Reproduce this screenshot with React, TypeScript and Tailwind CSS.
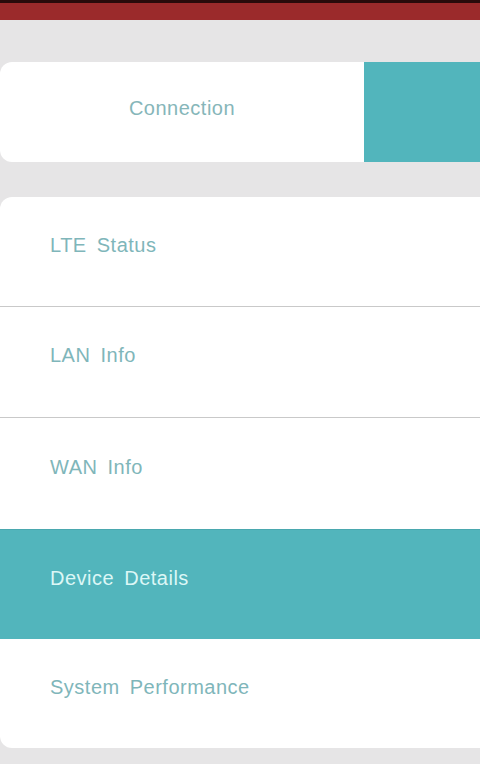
import React from "react";

const items = [
  { label: "LTE Status", active: false, h: "h-[110px]" },
  { label: "LAN Info", active: false, h: "h-[111px]" },
  { label: "WAN Info", active: false, h: "h-[111px]" },
  { label: "Device Details", active: true, h: "h-[110px]" },
  { label: "System Performance", active: false, h: "h-[109px]" },
];

export default function App() {
  return (
    <div
      className="w-[480px] h-[764px] bg-[#e6e5e6] flex flex-col overflow-hidden"
      style={{ fontFamily: '"Liberation Sans", Arial, sans-serif' }}
    >
      <div className="h-[3px] bg-[#2a0b0b]" />
      <div className="h-[17px] bg-[#9b2a2b]" />
      <div className="h-[42px]" />
      <div className="h-[100px] flex">
        <div className="w-[364px] bg-white rounded-l-[12px] flex items-center justify-center pb-[8px]">
          <span className="text-[20px] text-[#86b6b9] tracking-[0.5px]">Connection</span>
        </div>
        <div className="flex-1 bg-[#52b5bc]" />
      </div>
      <div className="h-[35px]" />
      <div className="bg-white rounded-l-[12px] flex flex-col">
        {items.map((it, i) => (
          <div
            key={it.label}
            className={
              it.h +
              " flex items-center pl-[50px] pb-[14px] " +
              (it.active ? "bg-[#52b5bc] border-t border-[#4aa8af] " : "") +
              (i < 2 ? "border-b-[1.5px] border-[#c9c9c9]" : "")
            }
          >
            <span
              className={
                "text-[20px] tracking-[0.5px] [word-spacing:4px] " +
                (it.active ? "text-[#dcf7f6]" : "text-[#7fb6ba]")
              }
            >
              {it.label}
            </span>
          </div>
        ))}
      </div>
    </div>
  );
}
